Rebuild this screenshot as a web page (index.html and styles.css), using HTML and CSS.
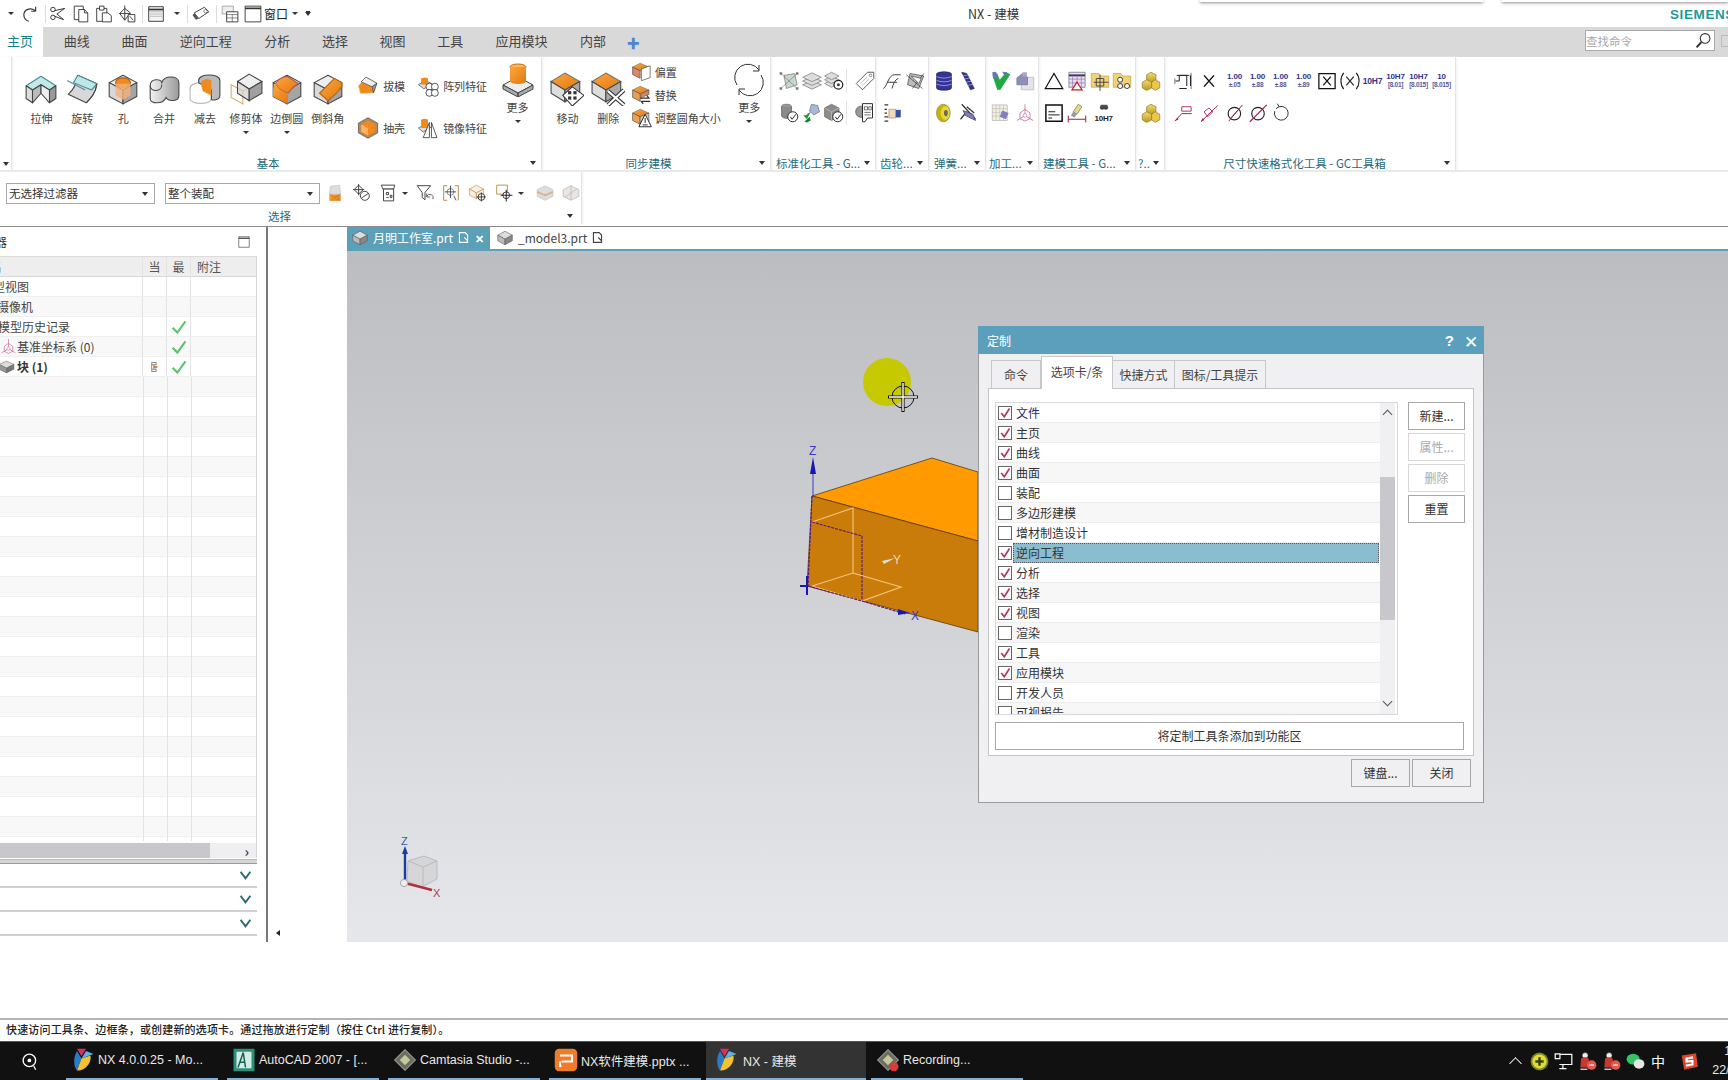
FILE: index.html
```html
<!DOCTYPE html>
<html lang="zh">
<head>
<meta charset="utf-8">
<title>NX - 建模</title>
<link rel="stylesheet" href="styles.css">
</head>
<body>
<svg class="defs" aria-hidden="true">
<defs>
<linearGradient id="og" x1="0" y1="0" x2="1" y2="1"><stop offset="0" stop-color="#ffa63a"/><stop offset="1" stop-color="#e07812"/></linearGradient>
<linearGradient id="gg" x1="0" y1="0" x2="1" y2="0"><stop offset="0" stop-color="#f2f2f2"/><stop offset="1" stop-color="#9a9a9a"/></linearGradient>
<linearGradient id="yg" x1="0" y1="0" x2="0" y2="1"><stop offset="0" stop-color="#f5dc70"/><stop offset="1" stop-color="#b89a20"/></linearGradient>
<symbol id="cube" viewBox="0 0 32 32"><g stroke="#444" stroke-linejoin="round"><path d="M16 3 29 10 16 17 3 10Z" fill="#eee"/><path d="M3 10 16 17V30L3 23Z" fill="#d8d8d8"/><path d="M29 10 16 17V30L29 23Z" fill="#a4a4a4"/></g></symbol>
<symbol id="extrude" viewBox="0 0 32 32"><g stroke="#444" stroke-linejoin="round"><path d="M2 13 16 4 30 13 24 17 16 12 8 17Z" fill="#c4e8ea" stroke="#3f8f96"/><path d="M2 13 8 17V29L2 25Z" fill="#ddd"/><path d="M8 17 16 12V20L8 29Z" fill="#bbb"/><path d="M16 12 24 17V29L16 20Z" fill="#eee"/><path d="M30 13 24 17V29L30 25Z" fill="#999"/></g></symbol>
<symbol id="revolve" viewBox="0 0 32 32"><g stroke="#444" stroke-linejoin="round"><path d="M12 3 30 11C29 20 24 25 20 29L3 21C8 17 11 10 12 3Z" fill="#d8d8d8"/><path d="M12 3 30 11 25 17 8 10Z" fill="#bfe6e8" stroke="#3f8f96"/><path d="M2 8 19 17" stroke="#58a"/><path d="M20 29C24 25 29 20 30 11" fill="none"/></g></symbol>
<symbol id="hole" viewBox="0 0 32 32"><use href="#cube"/><ellipse cx="16" cy="10" rx="7" ry="4.5" fill="#f08a1d" stroke="#b45f10"/><path d="M9 11V22L16 26 23 22V11" fill="#f5b27a" fill-opacity=".8" stroke="none"/></symbol>
<symbol id="unite" viewBox="0 0 32 32"><path d="M3 13C3 6 13 6 14 10 16 3 30 3 30 10V22C30 28 20 28 18 24 15 31 3 30 3 25Z" fill="url(#gg)" stroke="#444"/><path d="M3 13C3 19 14 19 14 12" fill="none" stroke="#444"/></symbol>
<symbol id="subtract" viewBox="0 0 32 32"><ellipse cx="12" cy="15" rx="10" ry="5" fill="#fff" stroke="#aaa"/><path d="M2 15V25C2 31 22 31 22 25V15" fill="#fff" stroke="#bbb"/><path d="M10 8C10 1 30 1 30 8V22C30 26 24 27 22 26V17L10 10Z" fill="#bbb" stroke="#444"/><path d="M12 11C12 6 22 5 22 9V22L14 18Z" fill="#f08a1d"/></symbol>
<symbol id="trim" viewBox="0 0 32 32"><g fill="none" stroke="#e0a868"><path d="M2 12 13 18V30L2 24ZM13 18 24 12"/></g><g stroke="#444"><path d="M19 2 31 9 19 16 8 9Z" fill="#eee"/><path d="M8 9 19 16V27L8 20Z" fill="#d0d0d0" fill-opacity=".7"/><path d="M31 9 19 16V27L31 20Z" fill="#a0a0a0"/></g></symbol>
<symbol id="blend" viewBox="0 0 32 32"><use href="#cube"/><path d="M5 11C8 6 12 5 16 4L27 11C22 13 20 16 17 20 12 19 7 15 5 11Z" fill="url(#og)" stroke="#a55"/><path d="M3 18C3 14 4 12 5 11 7 15 12 19 17 20V30L3 23Z" fill="url(#og)"/></symbol>
<symbol id="chamfer" viewBox="0 0 32 32"><use href="#cube"/><path d="M29 10 22 6 8 20 16 27 24 20 29 14Z" fill="url(#og)" stroke="#b06010"/></symbol>
<symbol id="draft" viewBox="0 0 32 32"><path d="M13 3 29 12 24 26 5 27 2 16Z" fill="#f08a1d" stroke="#ffc07a"/><path d="M13 3 29 12 22 17 6 10Z" fill="#eee" stroke="#444"/><path d="M29 12 22 17 24 26Z" fill="#999" stroke="#444"/></symbol>
<symbol id="shell" viewBox="0 0 32 32"><path d="M16 1 30 9V23L16 31 2 23V9Z" fill="#b58a5a" stroke="#444"/><path d="M16 5 26 11V21L16 27 6 21V11Z" fill="#f08a1d"/><path d="M6 11 16 16V27L6 21Z" fill="#ffb060"/></symbol>
<symbol id="pattern" viewBox="0 0 32 32"><path d="M2 14 13 8 22 13 10 20Z" fill="#ddd" stroke="#444"/><ellipse cx="11" cy="6" rx="5" ry="2.5" fill="#f08a1d"/><path d="M6 6V14H16V6Z" fill="#f08a1d"/><g fill="#fff" stroke="#111"><circle cx="18" cy="17" r="5"/><circle cx="26" cy="17" r="5"/><circle cx="18" cy="26" r="5"/><circle cx="26" cy="26" r="5"/></g></symbol>
<symbol id="mirror" viewBox="0 0 32 32"><path d="M2 16 12 10 20 15 9 22Z" fill="#ddd" stroke="#444"/><ellipse cx="11" cy="5" rx="5" ry="2.5" fill="#f08a1d"/><path d="M6 5V16H16V5Z" fill="#f08a1d"/><path d="M18 8 9 30H18ZM21 8 29 30H21Z" fill="#fff" stroke="#111"/></symbol>
<symbol id="morebig" viewBox="0 0 32 32"><path d="M16 13 31 21 16 29 1 21Z" fill="#eee" stroke="#444"/><path d="M1 21 16 29V33L1 25ZM31 21 16 29V33L31 25Z" fill="#aaa" stroke="#444"/><ellipse cx="16" cy="3" rx="8" ry="3" fill="#ffb45a" stroke="#c47010"/><path d="M8 3V17C8 21 24 21 24 17V3" fill="url(#og)"/></symbol>
<symbol id="move" viewBox="0 0 32 32"><path d="M14 1 28 9 14 17 1 9Z" fill="url(#og)" stroke="#777"/><path d="M1 9 14 17V28L1 20Z" fill="#ddd" stroke="#444"/><path d="M28 9 14 17V28L28 20Z" fill="#aaa" stroke="#444"/><path d="M21 14 32 22 21 32 12 22Z" fill="#fff" stroke="#333"/><g fill="#333"><rect x="17" y="18" width="3" height="3"/><rect x="22" y="18" width="3" height="3"/><rect x="17" y="23" width="3" height="3"/><rect x="22" y="23" width="3" height="3"/></g></symbol>
<symbol id="del" viewBox="0 0 32 32"><path d="M14 1 28 9 14 17 1 9Z" fill="url(#og)" stroke="#777"/><path d="M1 9 14 17V28L1 20Z" fill="#ddd" stroke="#444"/><path d="M28 9 14 17V28L28 20Z" fill="#aaa" stroke="#444"/><path d="M16 18 31 31M31 17 16 31" stroke="#333" stroke-width="4"/><path d="M16 18 31 31M31 17 16 31" stroke="#fff" stroke-width="2"/></symbol>
<symbol id="offset" viewBox="0 0 32 32"><path d="M13 2 27 8 13 14 1 8Z" fill="url(#og)" stroke="#777"/><path d="M1 8 13 14V26L1 20Z" fill="#d86" stroke="#444"/><path d="M15 11 29 6V25L15 30Z" fill="#fff" stroke="#333"/></symbol>
<symbol id="replace" viewBox="0 0 32 32"><path d="M13 2 27 8 13 14 1 8Z" fill="url(#og)" stroke="#777"/><path d="M1 8 13 14V26L1 20Z" fill="#e8a050" stroke="#444"/><path d="M27 8V15L14 22V14Z" fill="#c86" stroke="#444"/><path d="M13 21H27L24 17M29 26H15L18 30" fill="#fff" stroke="#333" stroke-width="2"/></symbol>
<symbol id="resize" viewBox="0 0 32 32"><path d="M13 2 27 8 13 14 1 8Z" fill="url(#og)" stroke="#777"/><path d="M1 8 13 14V26L1 20Z" fill="#f0a050" stroke="#444"/><path d="M27 8V22L13 28V14Z" fill="#ccc" stroke="#444"/><path d="M21 10 31 30H11Z" fill="#fff" stroke="#222" stroke-width="1.5"/><path d="M21 16V24M17 27H25" stroke="#222" stroke-width="1.5"/></symbol>
<symbol id="refresh" viewBox="0 0 32 32"><g fill="none" stroke="#333"><path d="M4 21A13 13 0 0 1 26 6M26 1V7H20M28 11A13 13 0 0 1 6 26M6 31V25H12"/></g></symbol>
<symbol id="wirecube" viewBox="0 0 32 32"><path d="M8 7 25 4 29 22 12 28Z" fill="#c8d8c8" stroke="#666"/><path d="M3 4 29 28M29 4 3 28" stroke="#777"/><g fill="#777"><rect x="1" y="2" width="4" height="4"/><rect x="27" y="2" width="4" height="4"/><rect x="1" y="26" width="4" height="4"/><rect x="27" y="26" width="4" height="4"/></g></symbol>
<symbol id="layers" viewBox="0 0 32 32"><g fill="#ddd" stroke="#666"><path d="M16 15 31 22 16 29 1 22Z"/><path d="M16 9 31 16 16 23 1 16Z"/><path d="M16 3 31 10 16 17 1 10Z"/></g></symbol>
<symbol id="layersgear" viewBox="0 0 32 32"><g fill="#ddd" stroke="#666"><path d="M12 14 24 20 12 26 1 20Z"/><path d="M12 8 24 14 12 20 1 14Z"/><path d="M12 2 24 8 12 14 1 8Z"/></g><circle cx="23" cy="22" r="7" fill="#fff" stroke="#222" stroke-width="2"/><circle cx="23" cy="22" r="2.5" fill="#444"/></symbol>
<symbol id="tag" viewBox="0 0 32 32"><path d="M20 2H30V12L12 30 2 20Z" fill="#fff" stroke="#555" stroke-width="1.5"/><circle cx="25" cy="7" r="2" fill="none" stroke="#555"/><path d="M9 20 19 10M12 23 22 13" stroke="#999"/></symbol>
<symbol id="cylok" viewBox="0 0 32 32"><ellipse cx="12" cy="6" rx="8" ry="4" fill="#999" stroke="#555"/><path d="M4 6V20C4 26 20 26 20 20V6" fill="#8a8a8a" stroke="#555"/><circle cx="22" cy="22" r="8" fill="#fff" stroke="#222" stroke-width="1.5"/><path d="M18 22 21 26 27 18" fill="none" stroke="#222" stroke-width="1.5"/></symbol>
<symbol id="cubeok" viewBox="0 0 32 32"><path d="M12 2 24 8V22L12 28 1 22V8Z" fill="#8c8c8c" stroke="#555"/><path d="M1 8 12 14 24 8M12 14V28" stroke="#ccc" fill="none"/><circle cx="22" cy="22" r="8" fill="#fff" stroke="#222" stroke-width="1.5"/><path d="M18 22 21 26 27 18" fill="none" stroke="#222" stroke-width="1.5"/></symbol>
<symbol id="greenblue" viewBox="0 0 32 32"><path d="M2 20 8 26 14 14 9 17 7 19Z" fill="#1f9a3c"/><path d="M15 2 25 4 28 14 19 19 12 13Z" fill="#a9b8d8" stroke="#567"/><path d="M4 30 12 22 14 28 8 31Z" fill="#168030"/></symbol>
<symbol id="docgear" viewBox="0 0 32 32"><circle cx="10" cy="14" r="9" fill="#999" stroke="#444"/><path d="M12 1H28V24H20L16 30H12Z" fill="#fff" stroke="#222" stroke-width="1.5"/><path d="M15 6H20V11H15ZM22 6H26V11H22ZM15 15H25M15 19H25" fill="none" stroke="#222"/></symbol>
<symbol id="scurve" viewBox="0 0 32 32"><path d="M2 28C8 26 10 6 20 6H30M8 18H24M16 28C18 22 20 14 26 12" fill="none" stroke="#333" stroke-width="1.5"/></symbol>
<symbol id="gearcut" viewBox="0 0 32 32"><path d="M8 4 30 8 22 28 4 22Z" fill="#bbb" stroke="#333"/><path d="M2 6 28 28M30 4 12 28" stroke="#222"/><path d="M10 8 26 12 22 20Z" fill="#fff" stroke="#333"/></symbol>
<symbol id="handdash" viewBox="0 0 32 32"><path d="M4 3H10M4 10H8M4 16H8M4 22H10M4 29H10" stroke="#333" stroke-width="2"/><path d="M11 10H22V24H11Z" fill="#f1d9b8" stroke="#a85"/><rect x="22" y="11" width="8" height="12" fill="#3550a8"/></symbol>
<symbol id="stack" viewBox="0 0 32 32"><path d="M4 5C4 0 28 0 28 5V27C28 32 4 32 4 27Z" fill="#33339a" stroke="#224"/><g stroke="#ccd" fill="none"><path d="M4 9C10 12 22 12 28 9M4 15C10 18 22 18 28 15M4 21C10 24 22 24 28 21"/></g></symbol>
<symbol id="spring" viewBox="0 0 32 32"><path d="M6 2 14 4 26 28 20 30Z" fill="#33339a" stroke="#223"/><path d="M8 8 16 6M10 13 19 11M13 18 22 16M16 23 25 21" stroke="#bcd"/></symbol>
<symbol id="ring" viewBox="0 0 32 32"><ellipse cx="15" cy="16" rx="11" ry="14" fill="#c8b400" stroke="#776"/><ellipse cx="18" cy="16" rx="7" ry="11" fill="#e6d640"/><ellipse cx="19" cy="16" rx="3" ry="5" fill="#665"/></symbol>
<symbol id="clamp" viewBox="0 0 32 32"><path d="M6 2 28 26M4 26 14 14" stroke="#333" stroke-width="2"/><path d="M8 12 24 18 28 28 12 20Z" fill="#7d7dc0" stroke="#335"/><path d="M14 6 26 16" stroke="#333" stroke-width="2"/></symbol>
<symbol id="check" viewBox="0 0 32 32"><path d="M2 6 10 4 14 14 24 2 31 5 15 30H10Z" fill="#22a845"/><path d="M2 2 8 1 11 10 4 12ZM18 1 26 2 22 8Z" fill="#7070c0"/></symbol>
<symbol id="partdoc" viewBox="0 0 32 32"><path d="M10 10H30V30H10Z" fill="#e4e4e8" stroke="#aab"/><path d="M3 11 12 4 20 10V22H3Z" fill="#8f8fbc" stroke="#667"/><path d="M12 2H19V9H12Z" fill="#b0a0d0"/></symbol>
<symbol id="gridpart" viewBox="0 0 32 32"><path d="M2 3H26V28H2Z" fill="#f5f0d8" stroke="#aaa"/><path d="M8 3V28M14 3V28M20 3V28M2 9H26M2 15H26M2 21H26" stroke="#bbb"/><path d="M18 12 28 16 24 26 14 22Z" fill="#8080c0"/></symbol>
<symbol id="csys" viewBox="0 0 32 32"><g fill="none" stroke="#c06a9a" stroke-width="1.3"><path d="M16 2V20M16 20 3 28M16 20 29 28M8 16 16 10 24 16 24 25 16 29 8 25Z"/></g><circle cx="16" cy="20" r="3" fill="#fff" stroke="#c06a9a"/></symbol>
<symbol id="tri" viewBox="0 0 32 32"><path d="M16 4 30 28H2Z" fill="none" stroke="#111" stroke-width="2"/></symbol>
<symbol id="tablered" viewBox="0 0 32 32"><path d="M3 2H29V26H3Z" fill="#e8e0f0" stroke="#557"/><path d="M3 7H29" stroke="#335" stroke-width="3"/><path d="M9 7V26M16 7V26M23 7V26M3 13H29M3 19H29" stroke="#96a"/><path d="M16 18 24 30H8Z" fill="#fff" stroke="#c02020" stroke-width="2"/></symbol>
<symbol id="foldercross" viewBox="0 0 32 32"><path d="M2 4H14L17 8H30V26H2Z" fill="#f1d278" stroke="#b89a30"/><path d="M16 6V32M6 18H30M10 12H22V24H10Z" fill="none" stroke="#444" stroke-width="1.5"/></symbol>
<symbol id="foldergears" viewBox="0 0 32 32"><path d="M2 4H14L17 8H30V26H2Z" fill="#f1d278" stroke="#b89a30"/><circle cx="13" cy="14" r="4" fill="#fff" stroke="#333" stroke-width="1.5"/><circle cx="13" cy="24" r="4" fill="#fff" stroke="#333" stroke-width="1.5"/><circle cx="24" cy="24" r="4" fill="#fff" stroke="#333" stroke-width="1.5"/></symbol>
<symbol id="note" viewBox="0 0 32 32"><path d="M3 3H29V29H3Z" fill="#fff" stroke="#111" stroke-width="2.4"/><path d="M7 14H18M7 19H25M7 24H13" stroke="#111" stroke-width="1.5"/></symbol>
<symbol id="paintdim" viewBox="0 0 32 32"><path d="M2 20V31M30 20V31M2 26H30" stroke="#a02040" stroke-width="1.6"/><path d="M18 2 24 6 16 18 10 14Z" fill="#e8d880" stroke="#665"/><path d="M10 14 16 18 12 23 6 20Z" fill="#99a"/></symbol>
<symbol id="binoc" viewBox="0 0 32 32"><circle cx="11" cy="9" r="6" fill="#444"/><circle cx="21" cy="9" r="6" fill="#444"/><rect x="7" y="2" width="18" height="4" fill="#555"/></symbol>
<symbol id="goldblocks" viewBox="0 0 32 32"><g stroke="#8a7020"><path d="M16 2 24 6V15L16 19 9 15V6Z" fill="url(#yg)"/><path d="M9 14 17 18V27L9 31 2 27V18Z" fill="url(#yg)"/><path d="M23 14 30 18V27L23 31 17 27V18Z" fill="#e8c84a"/></g></symbol>
<symbol id="dimsq" viewBox="0 0 32 32"><path d="M10 16V7H22V24M6 7H26M10 28H22M4 16H10M28 7V24" fill="none" stroke="#223" stroke-width="1.6"/><path d="M3 12V21M29 3V29" stroke="#223"/></symbol>
<symbol id="xmark" viewBox="0 0 32 32"><path d="M8 7 24 25M24 7 8 25" stroke="#111" stroke-width="2.4"/></symbol>
<symbol id="xbox" viewBox="0 0 32 32"><path d="M3 4H29V28H3Z" fill="none" stroke="#111" stroke-width="2"/><path d="M10 9 22 23M22 9 10 23" stroke="#111" stroke-width="2"/></symbol>
<symbol id="xparen" viewBox="0 0 32 32"><path d="M6 3C0 10 0 22 6 29M26 3C32 10 32 22 26 29M10 9 22 23M22 9 10 23" fill="none" stroke="#222" stroke-width="1.8"/></symbol>
<symbol id="rdim" viewBox="0 0 32 32"><path d="M3 29 14 17H30" fill="none" stroke="#a02060" stroke-width="1.6"/><path d="M3 29 9 26 7 23Z" fill="#a02060"/><path d="M14 6H29V13H14Z" fill="none" stroke="#a02060" stroke-width="1.4"/></symbol>
<symbol id="rdim2" viewBox="0 0 32 32"><path d="M3 30 30 4" stroke="#a02060" stroke-width="1.6"/><path d="M3 30 9 27 6 24Z" fill="#a02060"/><path d="M8 14 16 8 22 14 14 22Z" fill="none" stroke="#a02060" stroke-width="1.4"/></symbol>
<symbol id="diam" viewBox="0 0 32 32"><circle cx="15" cy="17" r="10" fill="none" stroke="#222" stroke-width="1.8"/><path d="M6 29 28 3" stroke="#a02060" stroke-width="1.6"/><path d="M9 24 21 11" stroke="#222"/></symbol>
<symbol id="diam2" viewBox="0 0 32 32"><circle cx="16" cy="17" r="10" fill="none" stroke="#222" stroke-width="1.8"/><path d="M3 30 30 3" stroke="#a02060" stroke-width="2"/></symbol>
<symbol id="undo" viewBox="0 0 32 32"><path d="M13 6A11 11 0 1 1 6 13M13 6 10 1M13 6 8 9" fill="none" stroke="#333" stroke-width="1.6"/></symbol>
<symbol id="redo" viewBox="0 0 32 32"><path d="M26 11C20 4 6 6 5 17 5 24 10 28 14 29M26 11V3M26 11H18" fill="none" stroke="#333" stroke-width="2"/></symbol>
<symbol id="scissors" viewBox="0 0 32 32"><g fill="none" stroke="#333" stroke-width="1.7"><circle cx="7" cy="8" r="4"/><circle cx="7" cy="22" r="4"/><path d="M10 10 28 6 14 16 26 26 10 20"/></g></symbol>
<symbol id="copy" viewBox="0 0 32 32"><g fill="#fff" stroke="#333" stroke-width="1.6"><path d="M4 2H20V26H4Z"/><path d="M12 8H22L28 14V30H12Z"/><path d="M22 8V14H28" fill="none"/></g></symbol>
<symbol id="paste" viewBox="0 0 32 32"><g fill="#fff" stroke="#333" stroke-width="1.6"><path d="M3 6H21V29H3Z"/><path d="M8 2H16V9H8Z"/><path d="M13 14H23L29 19V30H13Z"/></g></symbol>
<symbol id="movecopy" viewBox="0 0 32 32"><g fill="none" stroke="#333" stroke-width="1.6"><path d="M12 6 22 14 12 27 3 15Z"/><path d="M12 1V27M2 15H22"/><path d="M18 17H30V30H18Z" fill="#fff"/><path d="M21 20 27 27"/></g></symbol>
<symbol id="window" viewBox="0 0 32 32"><path d="M3 3H29V29H3Z" fill="#f4f4f4" stroke="#333" stroke-width="1.6"/><path d="M3 8H29" stroke="#333" stroke-width="3"/><path d="M5 12H27M5 16H27M5 20H27" stroke="#bbb" stroke-width="2"/></symbol>
<symbol id="tilepair" viewBox="0 0 32 32"><path d="M2 2H22V16H2Z" fill="#eee" stroke="#777"/><path d="M10 12H30V30H10Z" fill="#fff" stroke="#333" stroke-width="1.6"/><path d="M10 17H30M20 17V30M10 23H30" stroke="#333"/></symbol>
<symbol id="winbig" viewBox="0 0 32 32"><path d="M2 2H30V30H2Z" fill="#fff" stroke="#333" stroke-width="1.6"/><path d="M2 6H30" stroke="#333" stroke-width="3"/></symbol>
<symbol id="eraser" viewBox="0 0 32 32"><path d="M4 14 22 4 30 12 12 24Z" fill="#fff" stroke="#333" stroke-width="1.6"/><path d="M4 14 12 24 7 26 1 18Z" fill="#555"/><circle cx="24" cy="11" r="3" fill="none" stroke="#333"/></symbol>
<symbol id="selcyl" viewBox="0 0 32 32"><path d="M6 18H26V30H6Z" fill="url(#og)"/><path d="M8 4 24 2 26 18 6 18Z" fill="#ddd" stroke="#bbb"/><path d="M6 18 16 24 26 18" fill="none" stroke="#c06010"/></symbol>
<symbol id="linked" viewBox="0 0 32 32"><g fill="none" stroke="#333" stroke-width="1.6"><path d="M10 2 18 10 10 18 2 10Z"/><path d="M10 0V20M0 10H20"/><circle cx="21" cy="21" r="8"/><path d="M15 25 27 17"/></g></symbol>
<symbol id="filterdoc" viewBox="0 0 32 32"><g fill="#fff" stroke="#333" stroke-width="1.6"><path d="M4 2H28L26 9H7Z"/><path d="M8 9H26V30H8Z"/><path d="M13 15H17V19H13ZM20 20H23V24H20ZM13 24H17"/></g></symbol>
<symbol id="filterundo" viewBox="0 0 32 32"><g fill="none" stroke="#333" stroke-width="1.6"><path d="M2 3H26L16 15V28L11 24V15Z"/><path d="M30 27A6 6 0 0 0 19 22M19 17V23H25" stroke="#555"/></g></symbol>
<symbol id="bracket" viewBox="0 0 32 32"><path d="M9 3H3V29H9M23 3H29V29" fill="none" stroke="#b08040" stroke-width="1.6"/><circle cx="15" cy="14" r="6" fill="none" stroke="#334"/><path d="M15 3V25M5 14H25M21 21 25 29" stroke="#334" stroke-width="1.5"/></symbol>
<symbol id="boxplus" viewBox="0 0 32 32"><path d="M13 2 26 9 13 16 1 9Z" fill="#fbf0e0" stroke="#b08040"/><path d="M1 9 13 16V26L1 20ZM26 9V20L13 26V16Z" fill="#fbf0e0" stroke="#b08040"/><circle cx="22" cy="23" r="6" fill="#fff" stroke="#222" stroke-width="1.5"/><path d="M22 15V31M14 23H30" stroke="#222" stroke-width="1.5"/></symbol>
<symbol id="rectplus" viewBox="0 0 32 32"><path d="M3 2H22V18H3Z" fill="#fff" stroke="#b08040" stroke-width="1.5"/><circle cx="20" cy="20" r="6" fill="#fff" stroke="#222" stroke-width="1.5"/><path d="M20 10V31M10 20H31" stroke="#222" stroke-width="1.8"/></symbol>
<symbol id="greyhex" viewBox="0 0 32 32"><path d="M16 3 30 10V22L16 29 2 22V10Z" fill="#ddd" stroke="#bbb"/><path d="M2 14 16 20 30 14" stroke="#d8b490" stroke-width="3" fill="none"/></symbol>
<symbol id="greyhex2" viewBox="0 0 32 32"><path d="M16 3 30 10V22L16 29 2 22V10Z" fill="#e6e6e6" stroke="#aaa"/><path d="M16 3V29M5 24 27 8" stroke="#c9a088"/></symbol>
<symbol id="tick" viewBox="0 0 20 20"><path d="M2 11 8 17 18 3" fill="none" stroke="#5cc46a" stroke-width="2.6"/></symbol>
<symbol id="red" viewBox="0 0 16 16"><path d="M3 8 7 13 14 2" fill="none" stroke="#b43860" stroke-width="2.2"/></symbol>
<symbol id="tree" viewBox="0 0 16 20"><path d="M3 2H11V6H3ZM3 14H11V18H3ZM3 6V14M7 6V14" fill="none" stroke="#555" stroke-width="1.2"/><rect x="6" y="8" width="7" height="4" fill="#c98a3a"/></symbol>
<symbol id="solid" viewBox="0 0 32 32"><path d="M16 6 30 12 16 19 2 12Z" fill="#ddd" stroke="#666"/><path d="M2 12 16 19V28L2 21Z" fill="#999" stroke="#666"/><path d="M30 12 16 19V28L30 21Z" fill="#777" stroke="#666"/></symbol>
<symbol id="chev" viewBox="0 0 16 12"><path d="M2 2 8 10 14 2" fill="none" stroke="#2d6a70" stroke-width="2.4"/></symbol>
<symbol id="nx" viewBox="0 0 32 32"><path d="M8 4 14 14 8 30C3 24 3 12 8 4Z" fill="#2b7cc6"/><path d="M14 14 8 30C18 31 28 20 26 10Z" fill="#f2c230"/><path d="M8 1 20 1 14 11Z" fill="#d83060"/><path d="M14 14 20 4 30 8Z" fill="#64b0e8"/></symbol>
<symbol id="cad" viewBox="0 0 32 32"><rect x="2" y="1" width="28" height="30" fill="#2b8f7a"/><rect x="6" y="5" width="20" height="22" fill="#d4ece6"/><path d="M8 26 15 6 18 26M10 19H17" fill="none" stroke="#1b5f50" stroke-width="2"/></symbol>
<symbol id="cam" viewBox="0 0 32 32"><path d="M16 2 30 16 16 30 2 16Z" fill="#6a6f60" stroke="#ddd"/><path d="M16 9 23 16 16 23 9 16Z" fill="#c6c89a"/></symbol>
<symbol id="camrec" viewBox="0 0 32 32"><use href="#cam"/><circle cx="24" cy="25" r="6" fill="#d83a3a"/></symbol>
<symbol id="wps" viewBox="0 0 32 32"><rect x="1" y="1" width="30" height="30" rx="6" fill="#ef7b2c"/><path d="M8 10H24V18H10M10 24H8V18" fill="none" stroke="#fff" stroke-width="2.6"/></symbol>
<symbol id="search" viewBox="0 0 32 32"><circle cx="15" cy="15" r="10" fill="none" stroke="#fff" stroke-width="2.2"/><circle cx="15" cy="15" r="3" fill="#fff"/><path d="M22 24 25 30" stroke="#fff" stroke-width="2"/></symbol>
<symbol id="mag" viewBox="0 0 32 32"><circle cx="19" cy="12" r="9" fill="#fff" stroke="#333" stroke-width="2"/><path d="M12 19 3 29" stroke="#333" stroke-width="4"/></symbol>
<symbol id="prt" viewBox="0 0 32 32"><path d="M16 4 29 11 16 18 3 11Z" fill="#ddd" stroke="#555"/><path d="M3 11 16 18V28L3 21Z" fill="#bbb" stroke="#555"/><path d="M29 11 16 18V28L29 21Z" fill="#888" stroke="#555"/></symbol>
<symbol id="saveic" viewBox="0 0 16 16"><path d="M3 2H10L13 5V14H3Z" fill="none" stroke="currentColor" stroke-width="1.4"/><path d="M9 8 13 12" stroke="currentColor" stroke-width="1.4"/></symbol>
<symbol id="plusg" viewBox="0 0 32 32"><circle cx="16" cy="16" r="15" fill="#7a8a20"/><circle cx="16" cy="16" r="12" fill="#e4dc30"/><path d="M16 9V23M9 16H23" stroke="#334010" stroke-width="4"/></symbol>
<symbol id="netw" viewBox="0 0 32 32"><path d="M9 4H30V21H9M15 21V28M9 28H21M2 3H10V11H2Z" fill="none" stroke="#fff" stroke-width="2"/></symbol>
<symbol id="qq" viewBox="0 0 32 32"><circle cx="12" cy="6" r="5" fill="#eee" stroke="#222"/><path d="M5 12C6 8 18 8 18 12L20 26H4Z" fill="#c8382e"/><circle cx="23" cy="22" r="8" fill="#e05a50"/><path d="M19 22H27" stroke="#fff" stroke-width="2"/><path d="M4 29H16" stroke="#eee" stroke-width="2"/></symbol>
<symbol id="wechat" viewBox="0 0 32 32"><ellipse cx="12" cy="12" rx="11" ry="9" fill="#33c463"/><ellipse cx="22" cy="20" rx="9" ry="8" fill="#e6e6e6"/></symbol>
<symbol id="sogou" viewBox="0 0 32 32"><path d="M3 6 27 2 30 25 7 30Z" fill="#d8482a"/><path d="M22 9 11 11V16L21 15V21L10 23" fill="none" stroke="#fff" stroke-width="3.6"/></symbol>
</defs>
</svg>

<div class="app">
  <header class="titlebar">
    <div class="qat">
      <span class="caret q1"></span>
      <svg class="qi q2"><use href="#redo"/></svg><i class="qs q3"></i>
      <svg class="qi"><use href="#scissors"/></svg>
      <svg class="qi"><use href="#copy"/></svg>
      <svg class="qi"><use href="#paste"/></svg>
      <svg class="qi"><use href="#movecopy"/></svg><i class="qs"></i>
      <svg class="qi"><use href="#window"/></svg><span class="caret q4"></span><i class="qs"></i>
      <svg class="qi"><use href="#eraser"/></svg><i class="qs"></i>
      <svg class="qi"><use href="#tilepair"/></svg>
      <svg class="qi"><use href="#winbig"/></svg>
      <span class="qtxt">窗口</span><span class="caret q5"></span><span class="caret q6"></span>
    </div>
    <div class="apptitle">NX - 建模</div>
    <div class="shadow s1"></div><div class="shadow s2"></div>
    <div class="brand">SIEMENS</div>
  </header>

  <nav class="tabbar">
    <span class="rtab active">主页</span>
    <span class="rtab">曲线</span>
    <span class="rtab">曲面</span>
    <span class="rtab w4">逆向工程</span>
    <span class="rtab">分析</span>
    <span class="rtab">选择</span>
    <span class="rtab">视图</span>
    <span class="rtab">工具</span>
    <span class="rtab w4">应用模块</span>
    <span class="rtab">内部</span>
    <span class="plus">✚</span>
    <div class="cmdsearch"><span>查找命令</span><svg class="mag"><use href="#mag"/></svg></div>
    <span class="cmdmin"></span>
  </nav>

  <section class="ribbon">
    <div class="rg g0"><span class="tip tip0"></span></div>
    <div class="rg g1">
      <div class="rc">
        <div class="big"><svg><use href="#extrude"/></svg><b>拉伸</b></div>
        <div class="big"><svg><use href="#revolve"/></svg><b>旋转</b></div>
        <div class="big"><svg><use href="#hole"/></svg><b>孔</b></div>
        <div class="big"><svg><use href="#unite"/></svg><b>合并</b></div>
        <div class="big"><svg><use href="#subtract"/></svg><b>减去</b></div>
        <div class="big"><svg><use href="#trim"/></svg><b>修剪体</b><span class="caret"></span></div>
        <div class="big"><svg><use href="#blend"/></svg><b>边倒圆</b><span class="caret"></span></div>
        <div class="big"><svg><use href="#chamfer"/></svg><b>倒斜角</b></div>
        <div class="smc c60">
          <div class="sm"><svg><use href="#draft"/></svg>拔模</div>
          <div class="sm"><svg><use href="#shell"/></svg>抽壳</div>
        </div>
        <div class="smc c80">
          <div class="sm"><svg><use href="#pattern"/></svg>阵列特征</div>
          <div class="sm"><svg><use href="#mirror"/></svg>镜像特征</div>
        </div>
        <div class="big more"><svg><use href="#morebig"/></svg><b>更多</b><span class="caret"></span></div>
      </div>
      <div class="rl">基本<span class="tip"></span></div>
    </div>
    <div class="rg g2">
      <div class="rc">
        <div class="big"><svg><use href="#move"/></svg><b>移动</b></div>
        <div class="big"><svg><use href="#del"/></svg><b>删除</b></div>
        <div class="smt">
          <div class="sm"><svg><use href="#offset"/></svg>偏置</div>
          <div class="sm"><svg><use href="#replace"/></svg>替换</div>
          <div class="sm"><svg><use href="#resize"/></svg>调整圆角大小</div>
        </div>
        <div class="big more"><svg><use href="#refresh"/></svg><b>更多</b><span class="caret"></span></div>
      </div>
      <div class="rl">同步建模<span class="tip"></span></div>
    </div>
    <div class="rg g3">
      <div class="ig ig3">
        <svg><use href="#wirecube"/></svg><svg><use href="#layers"/></svg><svg><use href="#layersgear"/></svg><span class="sepl"><svg><use href="#tag"/></svg></span>
        <svg><use href="#cylok"/></svg><svg><use href="#greenblue"/></svg><svg><use href="#cubeok"/></svg><span class="sepl"><svg><use href="#docgear"/></svg></span>
      </div>
      <div class="rl lft">标准化工具 - G...<span class="tip"></span></div>
    </div>
    <div class="rg g4">
      <div class="ig ig4">
        <svg><use href="#scurve"/></svg><svg><use href="#gearcut"/></svg>
        <svg><use href="#handdash"/></svg>
      </div>
      <div class="rl lft">齿轮...<span class="tip"></span></div>
    </div>
    <div class="rg g5">
      <div class="ig ig5">
        <svg><use href="#stack"/></svg><svg><use href="#spring"/></svg>
        <svg><use href="#ring"/></svg><svg><use href="#clamp"/></svg>
      </div>
      <div class="rl lft">弹簧...<span class="tip"></span></div>
    </div>
    <div class="rg g6">
      <div class="ig ig5">
        <svg><use href="#check"/></svg><svg><use href="#partdoc"/></svg>
        <svg><use href="#gridpart"/></svg><svg><use href="#csys"/></svg>
      </div>
      <div class="rl lft">加工...<span class="tip"></span></div>
    </div>
    <div class="rg g7">
      <div class="ig ig7">
        <svg><use href="#tri"/></svg><svg><use href="#tablered"/></svg><svg><use href="#foldercross"/></svg><svg><use href="#foldergears"/></svg>
        <svg><use href="#note"/></svg><svg><use href="#paintdim"/></svg><span class="tol bin"><svg><use href="#binoc"/></svg>10H7</span>
      </div>
      <div class="rl lft">建模工具 - G...<span class="tip"></span></div>
    </div>
    <div class="rg g8">
      <div class="ig ig8">
        <svg><use href="#goldblocks"/></svg>
        <svg><use href="#goldblocks"/></svg>
      </div>
      <div class="rl lft">?..<span class="tip"></span></div>
    </div>
    <div class="rg g9">
      <div class="ig ig9">
        <svg><use href="#dimsq"/></svg>
        <svg><use href="#xmark"/></svg>
        <span class="tol">1.00<br><small>±.05</small></span>
        <span class="tol">1.00<br><small>±.88</small></span>
        <span class="tol">1.00<br><small>±.88</small></span>
        <span class="tol">1.00<br><small>±.89</small></span>
        <svg><use href="#xbox"/></svg>
        <svg><use href="#xparen"/></svg>
        <span class="tol h1">10H7</span>
        <span class="tol">10H7<br><small>[8.01]</small></span>
        <span class="tol">10H7<br><small>[8.015]</small></span>
        <span class="tol">10<br><small>[8.015]</small></span>
        <svg><use href="#rdim"/></svg>
        <svg><use href="#rdim2"/></svg>
        <svg><use href="#diam"/></svg>
        <svg><use href="#diam2"/></svg>
        <svg><use href="#undo"/></svg>
      </div>
      <div class="rl">尺寸快速格式化工具 - GC工具箱<span class="tip"></span></div>
    </div>
  </section>

  <section class="selbar">
    <div class="selgroup">
      <div class="selrow">
        <div class="combo c1">无选择过滤器<span class="caret"></span></div>
        <div class="combo c2">整个装配<span class="caret"></span></div>
        <svg class="si"><use href="#selcyl"/></svg>
        <svg class="si"><use href="#linked"/></svg>
        <svg class="si"><use href="#filterdoc"/></svg><span class="caret s-c"></span>
        <svg class="si"><use href="#filterundo"/></svg>
        <svg class="si"><use href="#bracket"/></svg>
        <svg class="si"><use href="#boxplus"/></svg>
        <svg class="si"><use href="#rectplus"/></svg><span class="caret s-c s-w"></span>
        <svg class="si"><use href="#greyhex"/></svg>
        <svg class="si"><use href="#greyhex2"/></svg>
      </div>
      <div class="rl">选择<span class="tip"></span></div>
    </div>
  </section>

  <main class="work">
    <aside class="nav">
      <div class="navhead"><span class="navtitle">器</span><svg class="navmax"><use href="#winbig"/></svg></div>
      <div class="tbl">
        <div class="row head"><span class="c-name"><em class="t3">名</em></span><span class="c-a">当</span><span class="c-a">最</span><span class="c-n">附注</span></div>
        <div class="row"><span class="c-name"><em class="t1">型视图</em></span><span class="c-a"></span><span class="c-a"></span><span class="c-n"></span></div>
        <div class="row alt"><span class="c-name"><em class="t2">摄像机</em></span><span class="c-a"></span><span class="c-a"></span><span class="c-n"></span></div>
        <div class="row"><span class="c-name"><em class="t4">模型历史记录</em></span><span class="c-a"></span><span class="c-a"><svg class="tick"><use href="#tick"/></svg></span><span class="c-n"></span></div>
        <div class="row alt"><span class="c-name"><svg class="ricon"><use href="#csys"/></svg>基准坐标系 (0)</span><span class="c-a"></span><span class="c-a"><svg class="tick"><use href="#tick"/></svg></span><span class="c-n"></span></div>
        <div class="row"><span class="c-name bold"><svg class="ricon"><use href="#solid"/></svg>块 (1)</span><span class="c-a"><svg class="treei"><use href="#tree"/></svg></span><span class="c-a"><svg class="tick"><use href="#tick"/></svg></span><span class="c-n"></span></div>
        <div class="filler"></div>
        <div class="hscroll"><div class="hthumb"></div><span class="harrow">›</span></div>
      </div>
      <div class="split"></div>
      <div class="acc"><svg><use href="#chev"/></svg></div>
      <div class="acc"><svg><use href="#chev"/></svg></div>
      <div class="acc"><svg><use href="#chev"/></svg></div>
    </aside>
    <div class="gutter"><span class="colarrow"></span></div>
    <div class="viewarea">
      <div class="ftabs">
        <div class="ftab on"><svg class="fi"><use href="#prt"/></svg>月明工作室.prt<svg class="fs"><use href="#saveic"/></svg><span class="fx">✕</span></div>
        <div class="ftab"><svg class="fi"><use href="#prt"/></svg>_model3.prt<svg class="fs"><use href="#saveic"/></svg></div>
      </div>
      <div class="canvas">
        <svg class="scene" viewBox="347 250 1381 692">
          <circle cx="887" cy="381" r="24" fill="#c6c800"/>
          <path d="M812 495 932 457 978 471V540Z" fill="#ff9a00" stroke="#5a3a10" stroke-width=".8"/>
          <path d="M812 495 978 540V631L807 585Z" fill="#c97c0a" stroke="#5a3a10" stroke-width=".8"/>
          <g fill="none" stroke="#f4c078" stroke-width="1.2">
            <path d="M812 521 853 507V572L901 586 862 600 812 585M853 572 812 585"/>
          </g>
          <g fill="none" stroke="#5a1a70" stroke-width="1.1">
            <path d="M812 495 808 585M812 521 862 535V598" stroke-dasharray="3 1"/>
            <path d="M808 585 862 600 905 613" stroke-dasharray="3 1"/>
          </g>
          <path d="M813 495V470" stroke="#3a3ac0"/>
          <path d="M813 456 810 473H816Z" fill="#1818b0"/>
          <path d="M808 585H800M807 575V594" stroke="#1818b0" stroke-width="2"/>
          <path d="M898 608 910 612 898 614Z" fill="#1818b0"/>
          <path d="M882 560 895 557 884 563Z" fill="#ddd"/>
          <g font-family="Liberation Sans, sans-serif" font-size="12">
            <text x="809" y="454" fill="#3a3ac0">Z</text>
            <text x="893" y="563" fill="#e8d8c0">Y</text>
            <text x="911" y="619" fill="#3a3ac0">X</text>
          </g>
          <circle cx="903" cy="396" r="11" fill="none" stroke="#111" stroke-width="1"/>
          <path d="M903 381V411M888 396H918" stroke="#111" stroke-width="3.2"/>
          <path d="M903 382V410M889 396H917" stroke="#fff" stroke-width="1.4"/>
          <g stroke="#bbb" fill="#d4d4d6" fill-opacity=".9"><path d="M408 860 424 855 437 860 437 878 422 886 407 880Z"/><path d="M408 860 423 866 437 860M423 866V886" fill="none"/></g>
          <path d="M405 881V850" stroke="#1c3c9c" stroke-width="2.4"/>
          <path d="M405 845 402 853H408Z" fill="#1c3c9c"/>
          <path d="M405 882 432 889" stroke="#b03040" stroke-width="2.4"/>
          <circle cx="404" cy="882" r="3.6" fill="#eee" stroke="#aaa"/>
          <g font-family="Liberation Sans, sans-serif" font-size="11">
            <text x="401" y="844" fill="#3a5ab0">Z</text>
            <text x="433" y="896" fill="#b04050">X</text>
          </g>
        </svg>
      </div>
    </div>
  </main>

  <div class="below"></div>
  <div class="status">快速访问工具条、边框条，或创建新的选项卡。通过拖放进行定制（按住 Ctrl 进行复制）。</div>

  <footer class="taskbar">
    <svg class="tsearch"><use href="#search"/></svg>
    <div class="task"><svg><use href="#nx"/></svg>NX 4.0.0.25 - Mo...</div>
    <div class="task"><svg><use href="#cad"/></svg>AutoCAD 2007 - [...</div>
    <div class="task"><svg><use href="#cam"/></svg>Camtasia Studio -...</div>
    <div class="task"><svg><use href="#wps"/></svg>NX软件建模.pptx ...</div>
    <div class="task cur"><svg><use href="#nx"/></svg>NX - 建模</div>
    <div class="task"><svg><use href="#camrec"/></svg>Recording...</div>
    <div class="tray">
      <span class="tup"></span>
      <svg><use href="#plusg"/></svg>
      <svg><use href="#netw"/></svg>
      <svg><use href="#qq"/></svg>
      <svg><use href="#qq"/></svg>
      <svg><use href="#wechat"/></svg>
      <span class="ime">中</span>
      <svg class="sg"><use href="#sogou"/></svg>
      <div class="clock">17:30<br>22/6/2022</div>
    </div>
  </footer>

  <div class="dialog">
    <div class="dtitle"><span>定制</span><span class="dq">?</span><span class="dx">✕</span></div>
    <div class="dtabs">
      <span class="dtab t1w">命令</span>
      <span class="dtab t2w on">选项卡/条</span>
      <span class="dtab t3w">快捷方式</span>
      <span class="dtab t4w">图标/工具提示</span>
    </div>
    <div class="dpanel">
      <div class="dtop">
        <div class="list">
          <div class="rows">
            <div class="li"><span class="cb"><svg><use href="#red"/></svg></span><label class="first">文件</label></div>
            <div class="li alt"><span class="cb"><svg><use href="#red"/></svg></span><label>主页</label></div>
            <div class="li"><span class="cb"><svg><use href="#red"/></svg></span><label>曲线</label></div>
            <div class="li alt"><span class="cb"><svg><use href="#red"/></svg></span><label>曲面</label></div>
            <div class="li"><span class="cb"></span><label>装配</label></div>
            <div class="li alt"><span class="cb"></span><label>多边形建模</label></div>
            <div class="li"><span class="cb"></span><label>增材制造设计</label></div>
            <div class="li sel"><span class="cb"><svg><use href="#red"/></svg></span><label>逆向工程</label></div>
            <div class="li"><span class="cb"><svg><use href="#red"/></svg></span><label>分析</label></div>
            <div class="li alt"><span class="cb"><svg><use href="#red"/></svg></span><label>选择</label></div>
            <div class="li"><span class="cb"><svg><use href="#red"/></svg></span><label>视图</label></div>
            <div class="li alt"><span class="cb"></span><label>渲染</label></div>
            <div class="li"><span class="cb"><svg><use href="#red"/></svg></span><label>工具</label></div>
            <div class="li alt"><span class="cb"><svg><use href="#red"/></svg></span><label>应用模块</label></div>
            <div class="li"><span class="cb"></span><label>开发人员</label></div>
            <div class="li alt"><span class="cb"></span><label>可视报告</label></div>
          </div>
          <div class="vscroll"><span class="vup"></span><div class="vthumb"></div><span class="vdn"></span></div>
        </div>
        <div class="dbtns">
          <span class="btn">新建...</span>
          <span class="btn off">属性...</span>
          <span class="btn off">删除</span>
          <span class="btn">重置</span>
        </div>
      </div>
      <span class="btn add">将定制工具条添加到功能区</span>
    </div>
    <div class="dfoot"><span class="btn fb">键盘...</span><span class="btn fb">关闭</span></div>
  </div>
</div>
</body>
</html>
```
FILE: styles.css
```css
* { box-sizing: border-box; }
html, body { margin: 0; padding: 0; background: #fff; }
body { width: 1728px; height: 1080px; overflow: hidden; font-family: "Noto Sans CJK SC", "Noto Sans", sans-serif; font-size: 12px; color: #333; }
.defs { width: 0; height: 0; position: absolute; }
.app { position: relative; display: flex; flex-direction: column; width: 1728px; height: 1080px; overflow: hidden; }
em, b { font-style: normal; font-weight: 400; }

.caret { display: inline-block; width: 0; height: 0; border-left: 3px solid transparent; border-right: 3px solid transparent; border-top: 3px solid #333; flex: none; }

/* title bar */
.titlebar { position: relative; height: 27px; flex: none; display: flex; align-items: center; background: #fff; }
.qat { display: flex; align-items: center; height: 27px; padding-left: 8px; }
.qi { width: 18px; height: 18px; margin-right: 5px; flex: none; }
.qs { width: 1px; height: 18px; background: #ddd; margin: 0 4px 0 1px; flex: none; }
.q1 { margin-right: 7px; }
.q3 { margin-right: 3px; }
.q4 { margin: 0 6px 0 4px; }
.q5 { margin: 0 7px 0 4px; }
.q6 { border-top-width: 4px; box-shadow: 0 -2px 0 -1px #333; }
.qtxt { font-size: 12px; color: #222; margin-left: -3px; }
.apptitle { position: absolute; left: 968px; top: 4px; font-size: 12.5px; color: #333; }
.shadow { position: absolute; top: 0; height: 2px; background: #fff; box-shadow: 0 1px 3px #777; }
.s1 { left: 1200px; width: 283px; }
.s2 { left: 1502px; width: 226px; }
.brand { position: absolute; left: 1670px; top: 7px; font: 700 13.5px "Liberation Sans", sans-serif; letter-spacing: .6px; color: #1d9a9a; white-space: nowrap; }

/* ribbon tabs */
.tabbar { height: 30px; flex: none; display: flex; align-items: center; background: #d9d9d9; position: relative; font-size: 13px; color: #444; }
.rtab { width: 57.7px; height: 30px; line-height: 28px; text-align: center; flex: none; }
.rtab.active { width: 43px; background: #fff; color: #14808a; margin-right: 5px; padding-right: 3px; }
.rtab.w4 { width: 85px; }
.plus { color: #4f86d0; font-size: 13px; margin-left: 5px; }
.cmdsearch { position: absolute; left: 1585px; top: 3px; width: 130px; height: 21px; background: #fff; border: 1px solid #a8a8a8; display: flex; align-items: center; justify-content: space-between; font-size: 11.5px; color: #a8a8a8; }
.mag { width: 17px; height: 17px; margin-right: 2px; }
.cmdmin { position: absolute; left: 1721px; top: 8px; width: 7px; height: 12px; border: 1px solid #bbb; border-right: 0; }

/* ribbon */
.ribbon { height: 115px; flex: none; display: flex; background: #fff; border-bottom: 2px solid #e8e8e8; }
.rg { position: relative; display: flex; flex-direction: column; height: 113px; box-shadow: 1px 0 0 #e4e4e4, 2px 0 2px #f0f0f0; margin-right: 3px; }
.rc { display: flex; flex: 1; align-items: flex-start; }
.rl { position: relative; height: 14px; line-height: 14px; flex: none; margin: auto 0 0; text-align: center; font-size: 11.5px; color: #1f6a7a; white-space: nowrap; }
.rl.lft { text-align: left; }
.tip { position: absolute; right: 5px; top: 5px; width: 0; height: 0; border-left: 3px solid transparent; border-right: 3px solid transparent; border-top: 4px solid #333; }
.g0 { width: 11px; }
.tip0 { right: 2px; top: 105px; }
.g1 { width: 527px; padding-left: 7px; }
.g1 .rl { padding-right: 26px; }
.g2 { width: 226px; padding-left: 3px; margin-right: 4px; }
.g2 .rl { padding-right: 20px; }
.g3 { width: 101px; padding-left: 4px; margin-right: 3px; }
.g3 .rl { margin-left: -2px; }
.g4 { width: 50px; padding-left: 2px; margin-right: 3px; }
.g5 { width: 54px; padding-left: 1px; margin-right: 3px; }
.g5 .rl { margin-left: 2px; }
.g6 { width: 50px; padding-left: 1px; margin-right: 3px; }
.g7 { width: 94px; padding-left: 2px; margin-right: 3px; }
.g8 { width: 26px; margin-right: 3px; }
.g9 { width: 288px; padding-left: 4px; margin-right: 0; }
.g9 .rl { padding-right: 17px; }

.big { width: 40.9px; display: flex; flex-direction: column; align-items: center; padding-top: 15px; flex: none; font-size: 11px; color: #444; }
.big svg { width: 34px; height: 34px; flex: none; }
.big b { line-height: 14px; margin-top: 5px; white-space: nowrap; }
.big .caret { margin-top: 6px; }
.big.more { padding-top: 6px; }
.g1 .more { margin-left: 1px; }
.g2 .more { margin-left: 3px; }
.big.more svg { width: 32px; height: 34px; overflow: visible; }
.big.more b { margin-top: 3px; }
.smc { display: flex; flex-direction: column; gap: 20px; margin-top: 18px; flex: none; }
.c60 { width: 60px; margin-left: 8px; }
.c80 { width: 80px; }
.sm { display: flex; align-items: center; height: 22px; gap: 3px; font-size: 11px; color: #444; white-space: nowrap; }
.sm svg { width: 24px; height: 22px; flex: none; }
.smt { display: flex; flex-direction: column; gap: 1px; width: 94px; margin: 4px 0 0 3px; flex: none; }
.smt svg { width: 20px; height: 20px; }

.ig { display: grid; grid-auto-rows: 32px; align-items: center; justify-items: center; margin-top: 8px; flex: 1; align-content: start; }
.ig svg { width: 20px; height: 20px; }
.ig3 { grid-template-columns: 22.5px 22.5px 22.5px 37px; }
.ig4 { grid-template-columns: 23px 23px; }
.ig5 { grid-template-columns: 24px 24px; }
.ig7 { grid-template-columns: 22.7px 22.7px 22.7px 22.7px; }
.ig8 { grid-template-columns: 26px; }
.ig9 { grid-template-columns: 24px 28px repeat(10, 23px); }
.sepl { display: flex; align-items: center; justify-content: center; width: 37px; height: 24px; border-left: 1px solid #e4e4e4; }
.tol { font: 700 8px/8px "Liberation Sans", sans-serif; color: #33338a; text-align: center; white-space: nowrap; letter-spacing: -.2px; }
.tol small { font-size: 6.5px; color: #5a5a9a; letter-spacing: -.3px; }
.h1 { font-size: 8.5px; }
.bin { display: block; color: #222; margin-left: 8px; }
.ig .bin svg { display: block; width: 20px; height: 12px; margin: 0 auto -1px; }

/* selection bar */
.selbar { height: 54px; flex: none; display: flex; background: #fff; }
.selgroup { width: 581px; height: 52px; display: flex; flex-direction: column; box-shadow: 1px 0 0 #e4e4e4, 2px 0 2px #f0f0f0; }
.selrow { display: flex; align-items: center; height: 22px; margin-top: 10px; padding-left: 6px; }
.combo { position: relative; height: 21px; line-height: 19px; border: 1px solid #a8a8a8; background: #fff; padding-left: 2px; font-size: 11.5px; color: #333; flex: none; }
.combo .caret { position: absolute; right: 6px; top: 8px; border-top-width: 4px; }
.c1 { width: 149px; margin-right: 10px; }
.c2 { width: 155px; margin-right: 6px; }
.si { width: 18px; height: 18px; margin-right: 8.5px; flex: none; }
.s-c { margin: 0 8px 0 -4px; }
.s-w { margin-right: 12px; }
.selgroup .rl { margin: 5px 0 0; padding-right: 22px; }
.selgroup .tip { top: 5px; right: 8px; }

/* workspace */
.work { height: 716px; flex: none; display: flex; border-top: 1px solid #8a8a8a; background: #fff; }
.nav { width: 268px; flex: none; border-right: 2px solid #777; padding-right: 9px; display: flex; flex-direction: column; }
.navhead { height: 29px; flex: none; display: flex; align-items: center; justify-content: space-between; padding-right: 7px; font-size: 12px; }
.navtitle { margin-left: -5px; }
.navmax { width: 12px; height: 12px; }
.tbl { height: 602px; flex: none; border-right: 1px solid #d8d8d8; border-top: 1px solid #dcdcdc; display: flex; flex-direction: column; overflow: hidden; }
.row { display: flex; height: 20px; flex: none; line-height: 19px; border-bottom: 1px solid #efefef; font-size: 12px; color: #444; }
.row.alt { background: #f8f8f8; }
.row.head { height: 20px; background: #eeeeef; border-bottom: 1px solid #d8d8d8; color: #555; }
.c-name { width: 143px; flex: none; display: flex; align-items: center; overflow: hidden; white-space: nowrap; border-right: 1px solid #e4e4e4; }
.c-a { width: 24px; flex: none; display: flex; align-items: center; justify-content: center; border-right: 1px solid #e4e4e4; }
.c-n { flex: 1; padding-left: 6px; }
.t1 { margin-left: -7px; }
.t2 { margin-left: -3px; }
.t3 { margin-left: -10px; }
.t4 { margin-left: -2px; }
.bold { font-weight: 700; color: #333; }
.ricon { width: 17px; height: 17px; flex: none; }
.bold .ricon { margin-left: -2px; margin-right: 2px; }
.tick { width: 16px; height: 16px; margin-left: 1px; }
.treei { width: 9px; height: 14px; }
.filler { flex: 1; background:
  repeating-linear-gradient(to right, transparent 0 143px, #e4e4e4 143px 144px, transparent 144px 167px, #e4e4e4 167px 168px, transparent 168px 191px, #e4e4e4 191px 192px, transparent 192px 258px),
  repeating-linear-gradient(to bottom, #f8f8f8 0 19px, #efefef 19px 20px, #fff 20px 39px, #efefef 39px 40px); }
.hscroll { height: 17px; flex: none; display: flex; align-items: center; justify-content: space-between; background: #efeff1; border-top: 2px solid #fff; }
.hthumb { width: 210px; height: 15px; background: #c8c8cc; }
.harrow { color: #444; font-weight: 700; font-size: 14px; line-height: 14px; margin-right: 7px; }
.split { height: 5px; flex: none; margin-top: 1px; background: #d4d4d4; border-bottom: 1px solid #999; border-top: 1px solid #bbb; }
.acc { height: 24px; flex: none; display: flex; align-items: center; justify-content: flex-end; padding-right: 5px; border-bottom: 2px solid #d0d0d0; }
.acc svg { width: 13px; height: 10px; }

.gutter { width: 79px; flex: none; position: relative; background: #fff; }
.colarrow { position: absolute; left: 8px; bottom: 6px; width: 0; height: 0; border-top: 3px solid transparent; border-bottom: 3px solid transparent; border-right: 4px solid #222; }

.viewarea { flex: 1; display: flex; flex-direction: column; min-width: 0; }
.ftabs { height: 24px; flex: none; display: flex; background: #fff; border-bottom: 2px solid #5b9fb8; font-size: 12px; color: #444; }
.ftab { display: flex; align-items: center; height: 22px; padding: 0 0 1px 4px; white-space: nowrap; }
.ftab.on { width: 143px; height: 24px; padding-bottom: 3px; background: #5b9fb8; color: #fff; }
.fi { width: 18px; height: 18px; margin-right: 4px; flex: none; }
.ftab:not(.on) { padding-left: 6px; }
.fs { width: 13px; height: 13px; margin-left: 4px; }
.fx { margin-left: 5px; font-size: 11px; font-weight: 700; }
.canvas { flex: 1; background: linear-gradient(#bcbdc0, #e6e7eb); position: relative; }
.scene { position: absolute; left: 0; top: 0; width: 1381px; height: 692px; }

/* bottom */
.below { height: 76px; flex: none; background: #fff; }
.status { height: 23px; flex: none; line-height: 18px; border-top: 2px solid #b4b4b4; padding-left: 6px; font-size: 11px; letter-spacing: .16px; font-weight: 500; color: #222; white-space: nowrap; }
.taskbar { height: 39px; flex: none; display: flex; background: #111; color: #e8e8e8; font-size: 12.5px; position: relative; border-top: 1px solid #555; }
.tsearch { width: 20px; height: 20px; margin: 9px 26px 0 20px; flex: none; }
.task { width: 152px; margin-right: 9px; height: 38px; flex: none; display: flex; align-items: center; padding-left: 5px; gap: 3px; border-bottom: 2px solid #7fb0d8; white-space: nowrap; overflow: hidden; font-family: "Liberation Sans", "Noto Sans CJK SC", sans-serif; }
.task svg { width: 24px; height: 24px; flex: none; }
.task.cur { width: 160px; margin-left: -4px; margin-right: 5px; background: #333; padding-left: 8px; gap: 5px; }
.tray { position: absolute; left: 1505px; top: 0; height: 38px; width: 223px; display: flex; align-items: center; }
.tray svg { width: 19px; height: 19px; flex: none; margin-right: 5px; }
.tup { width: 9px; height: 9px; border-left: 1.5px solid #eee; border-top: 1.5px solid #eee; transform: rotate(45deg); margin: 5px 9.5px 0 6px; flex: none; }
.ime { font-size: 14px; color: #fff; width: 19px; margin: 0 10px 0 1.5px; flex: none; }
.tray .sg { margin-right: 13px; }
.clock { flex: none; width: 56px; font: 12.5px/19px "Liberation Sans", sans-serif; white-space: nowrap; text-align: center; }

/* dialog */
.dialog { position: absolute; left: 978px; top: 326px; width: 506px; height: 477px; background: #f0f0f2; border: 1px solid #9a9a9a; border-top: 0; display: flex; flex-direction: column; }
.dtitle { height: 28px; flex: none; margin: 0 -1px; background: #5b9fbd; color: #fff; display: flex; align-items: center; padding: 0 6px 0 9px; font-size: 12px; }
.dq { margin-left: auto; font: 700 15px "Liberation Sans", sans-serif; margin-right: 10px; }
.dx { font-size: 17px; line-height: 17px; }
.dtabs { display: flex; height: 28px; flex: none; margin-top: 6px; padding-left: 12px; position: relative; align-items: flex-end; }
.dtab { height: 28px; line-height: 28px; text-align: center; border: 1px solid #c8c8cc; border-bottom: 0; border-left-width: 0; background: #f0f0f2; color: #444; flex: none; }
.t1w { width: 50px; border-left-width: 1px; }
.t2w { width: 72px; }
.t3w { width: 62px; }
.t4w { width: 91px; }
.dtab.on { height: 33px; background: #fff; border-left-width: 1px; margin-bottom: -1px; position: relative; z-index: 1; line-height: 29px; }
.dpanel { height: 368px; flex: none; margin: 0 9px; background: #fff; border: 1px solid #c4c4c8; padding: 13px 0 0 6px; }
.dtop { display: flex; height: 313px; }
.list { width: 403px; height: 313px; border: 1px solid #d8d8dc; display: flex; flex: none; overflow: hidden; }
.rows { width: 384px; flex: none; overflow: hidden; }
.li { display: flex; align-items: center; height: 20px; border-bottom: 1px solid #ededf0; }
.li.alt { background: #f7f7f8; }
.cb { display: flex; align-items: center; justify-content: center; width: 14px; height: 14px; border: 1px solid #666; background: #fff; margin-left: 2px; flex: none; }
.cb svg { width: 12px; height: 12px; }
.li label { flex: 1; height: 20px; line-height: 19px; margin-left: 1px; padding-left: 3px; color: #333; }
.li label.first { color: #2a2a6a; }
.li.sel { border-bottom: 0; }
.li.sel label { margin-right: 1px; background: #8bbdd0; outline: 1px dotted #556; outline-offset: -1px; }
.vscroll { width: 15px; flex: none; background: #f0f0f2; position: relative; padding-top: 74px; }
.vthumb { height: 143px; background: #c8c8cc; }
.vup, .vdn { position: absolute; left: 4px; width: 7px; height: 7px; border-left: 1.5px solid #555; border-top: 1.5px solid #555; transform: rotate(45deg); }
.vup { top: 8px; }
.vdn { bottom: 9px; transform: rotate(225deg); }
.dbtns { display: flex; flex-direction: column; gap: 3px; margin-left: 10px; width: 57px; }
.btn { display: block; height: 28px; line-height: 26px; text-align: center; border: 1px solid #a8a8ac; background: #fff; color: #333; font-size: 12px; }
.btn.off { color: #aaa; border-color: #d8d8dc; }
.btn.add { width: 469px; margin-top: 7px; }
.dfoot { display: flex; justify-content: flex-end; gap: 2px; padding: 3px 12px 0 0; }
.btn.fb { width: 59px; background: #f0f0f2; }
```
